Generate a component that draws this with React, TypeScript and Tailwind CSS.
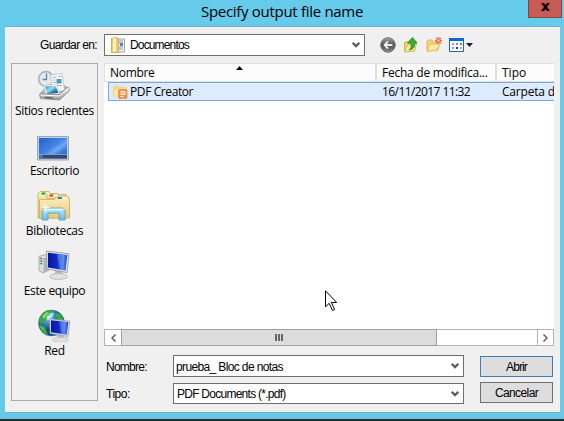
import React from "react";

const ui = "font-['Open_Sans','Noto_Sans',sans-serif] whitespace-nowrap text-[12px] text-black";
const sans = "font-['Liberation_Sans',Arial,sans-serif] whitespace-nowrap text-[12px] text-black";

function RecentIcon() {
  return (
    <svg width="32" height="32" viewBox="0 0 32 32">
      <defs>
        <linearGradient id="photo" x2="1" y2="1"><stop stopColor="#2b7fd0" /><stop offset=".4" stopColor="#9ad8f5" /><stop offset=".7" stopColor="#1b7a8c" /><stop offset="1" stopColor="#1668b8" /></linearGradient>
        <linearGradient id="tray" x2="0" y2="1"><stop stopColor="#efefef" /><stop offset="1" stopColor="#9c9c9c" /></linearGradient>
      </defs>
      <circle cx="8" cy="9" r="7.300" fill="#e2eaee" stroke="#a9b9c2" strokeWidth="1.800" />
      <path d="M8.500 3.500V9.500H4.500" fill="none" stroke="#6b8594" strokeWidth="1.300" />
      <path d="M2 24l6-7 19-1 4 3-10 9z" fill="#b4b4b4" stroke="#8c8c8c" strokeWidth=".7" />
      <path d="M12.500 5l11.500-1.500L26.500 20l-12 3z" fill="#fbfbfb" stroke="#bdbdbd" strokeWidth=".8" />
      <path d="M14.500 7.500l4-.5M14.500 10h3M15 12.500h3M20.500 6.500h3M19 15.500h5" stroke="#a5a5a5" strokeWidth=".9" />
      <path d="M18.500 9h5v4.500h-5z" fill="#4c9bb4" />
      <path d="M5.500 15.500l13-1 3.500 9.500-14 2z" fill="#fff" stroke="#b5b5b5" strokeWidth=".6" />
      <path d="M7 16.500l10.500-.8 3 7.300-11.500 1.300z" fill="url(#photo)" />
      <path d="M1.500 24.500l1.500-.5 18 .5 9-7.500 1.200 1v3l-9.700 9-19-1.500z" fill="url(#tray)" stroke="#7d7d7d" strokeWidth=".7" />
      <path d="M2.500 25l18.500 1 9.500-7.500" fill="none" stroke="#fff" strokeWidth="1" />
      <path d="M7 27.500l8 .7" stroke="#5f5f5f" strokeWidth="1.300" />
    </svg>
  );
}

function DesktopIcon() {
  return (
    <svg className="-ml-[2px]" width="32" height="32" viewBox="0 0 32 32">
      <defs>
        <linearGradient id="desk" x2="1" y2="1">
          <stop stopColor="#2861c0" /><stop offset=".45" stopColor="#3f83e6" /><stop offset=".6" stopColor="#6fa9f5" /><stop offset=".75" stopColor="#3a7ade" /><stop offset="1" stopColor="#2a62c4" />
        </linearGradient>
      </defs>
      <path d="M.5 6.500h31v23.500H.5z" fill="#c3cfde" stroke="#98a7bd" />
      <path d="M2 8h28v20.500H2z" fill="url(#desk)" />
      <path d="M2 24.500h28v4H2z" fill="#37496a" />
      <path d="M2 24.500h28" stroke="#7f98c2" />
      <path d="M2 25h4v3.500H2z" fill="#5a7392" />
    </svg>
  );
}

function LibrariesIcon() {
  return (
    <svg width="34" height="32" viewBox="0 0 34 32">
      <defs>
        <linearGradient id="lib" x2="0" y2="1"><stop stopColor="#fdf0bd" /><stop offset="1" stopColor="#e5c977" /></linearGradient>
        <linearGradient id="stand" x2="0" y2="1"><stop stopColor="#bcebfc" /><stop offset="1" stopColor="#6bb7dd" /></linearGradient>
      </defs>
      <path d="M1 28V4l2-2.500h9l2 3h15v23.500z" fill="url(#lib)" stroke="#cfaf5d" strokeWidth=".9" />
      <path d="M9.500 8V5.500l2-2h9l2 3h8V10z" fill="#fae8a7" stroke="#cfaf5d" strokeWidth=".9" />
      <path d="M2.500 28V9.500h15l2-3.500h11l2 3v19z" fill="url(#lib)" stroke="#cfaf5d" strokeWidth=".9" />
      <path d="M4.500 2.500h4v2h-4z" fill="#15a52e" /><path d="M12.500 4.500h4v2h-4z" fill="#d4412a" /><path d="M20.500 7h4.500v2h-4.500z" fill="#1b8cce" />
      <path d="M8.500 3.500h4M16.500 5.500h4M25 8h5" stroke="#fff" />
      <path d="M5 30V20.500l2-2.500h18.500l2.500 2.500V30h-6v-7H11v7z" fill="url(#stand)" stroke="#5ba5c9" strokeWidth=".9" />
      <path d="M6.500 19.500h20" stroke="#e1f9ff" strokeWidth="1.500" />
      <path d="M8.500 13v9M4 17.500h9M5.500 14.500l6 6M11.500 14.500l-6 6" stroke="#fff" strokeWidth=".8" />
    </svg>
  );
}

function Monitor() {
  return (
    <>
      <path d="M17 20l7 1 1 5h-8z" fill="#b9bcbd" />
      <ellipse cx="20.500" cy="26.500" rx="9" ry="3" fill="#e0e1e2" stroke="#b3b5b7" strokeWidth=".8" />
      <path d="M8.500 1l22.500 2.800-2 18.700-20-3.500z" fill="#dfe2e8" stroke="#8f949e" strokeWidth=".8" />
      <path d="M10 2.700l19.300 2.300-1.800 15.500-17.500-3z" fill="url(#screen)" />
      <path d="M19 4l8 1-2 15-3-.5z" fill="#7fa0f2" opacity=".45" />
    </>
  );
}

function ComputerIcon() {
  return (
    <svg width="32" height="32" viewBox="0 0 32 32">
      <defs><linearGradient id="screen" x2="1"><stop stopColor="#0a17a0" /><stop offset=".45" stopColor="#0d2ac4" /><stop offset=".8" stopColor="#4f7cea" /><stop offset="1" stopColor="#1d3fcb" /></linearGradient></defs>
      <path d="M1 6.500l6-2 4 1.500v14l-6 3-4-2.500z" fill="#dcdee0" stroke="#9a9da0" strokeWidth=".8" />
      <path d="M5.500 8l5-1v13l-5 2.500z" fill="#b0b4b8" />
      <path d="M2 8l2.500 1M2 10.500l2.500 1" stroke="#555" /><circle cx="3.200" cy="13.500" r="1.100" fill="#25b51e" />
      <Monitor />
    </svg>
  );
}

function NetworkIcon() {
  return (
    <svg width="34" height="33" viewBox="0 0 34 33">
      <defs><radialGradient id="globe" cx=".35" cy=".25"><stop stopColor="#cbefff" /><stop offset=".35" stopColor="#4da7dc" /><stop offset="1" stopColor="#104986" /></radialGradient></defs>
      <circle cx="14.500" cy="14" r="13" fill="url(#globe)" stroke="#397fa9" strokeWidth=".6" />
      <path d="M3 8C7 1 11 1 16 2l-2 4-4 1-1 4-5 4-2-2zM18 4l6 1 3 7-5-1-3-3zM2 15l6 3 2 5 1 3C6 25 3 21 2 15z" fill="#3aa83c" />
      <path d="M5 7l5-4 2 1-5 6zM3 17l3 2 1 3z" fill="#93d569" />
      <path d="M12 5q4-3 5 0l-3 5q-3 2-4 0z" fill="#d9f3ff" opacity=".7" />
      <g transform="translate(5 9) scale(.9 .82)"><Monitor /></g>
    </svg>
  );
}

function DocumentsIcon() {
  return (
    <svg width="15" height="17" viewBox="0 0 15 17">
      <path d="M4 2h9.500v13H4z" fill="#f3f6f7" stroke="#a1a5a8" />
      <path d="M8 4h4M8 6h4M8 10h4M8 12h4" stroke="#8a9ba7" /><path d="M9 6h3v3H9z" fill="#4583d2" />
      <path d="M.5 1.500l4-1 3 1v14H.5z" fill="#e9cc71" stroke="#c5a149" strokeWidth=".8" /><path d="M2 1h3v14H2z" fill="#fff0b0" />
    </svg>
  );
}

function FileFolderIcon() {
  return (
    <svg width="15" height="14" viewBox="0 0 15 14">
      <path d="M.5 11V2l1-1h4l1 1.500h6.500V11z" fill="#f9dc8a" stroke="#f0d284" /><path d="M1 5h12v5.500H1z" fill="#ffe9a8" />
      <rect x="5.500" y="4.500" width="8.500" height="9" rx="1" fill="#f0914a" stroke="#ee8236" strokeWidth=".6" />
      <path d="M8 6.500h4v3H8z" fill="#ffb67a" stroke="#fff2dc" /><path d="M7.500 11.500h3" stroke="#fff2dc" />
    </svg>
  );
}

const BackIcon = () => (
  <svg width="16" height="16" viewBox="0 0 16 16"><defs><linearGradient id="back" x2="0" y2="1"><stop stopColor="#a5a5a5" /><stop offset=".5" stopColor="#4c4c4c" /><stop offset="1" stopColor="#8a8a8a" /></linearGradient></defs><circle cx="8" cy="8" r="7.300" fill="url(#back)" stroke="#777" /><path d="M12.500 8h-8M8 4.500L4.500 8 8 11.500" fill="none" stroke="#eee" strokeWidth="1.800" /></svg>
);
const UpIcon = () => (
  <svg width="16" height="16" viewBox="0 0 16 16"><path d="M1.500 14V5.500l3-1 1 1h6V14z" fill="#f3d276" stroke="#d6b455" /><path d="M1.500 15l3-7.500 9-1-2 7.500z" fill="#ffe89b" stroke="#d9b755" /><path d="M6 13c2.500-1.500 2.500-4 2-7H4.500L9.500.5 14 6h-2.500c.5 3-.5 6-5.500 7z" fill="#3fae33" stroke="#1b7f22" strokeWidth=".8" /></svg>
);
const NewFolderIcon = () => (
  <svg width="16" height="16" viewBox="0 0 16 16"><path d="M1 13.500V4l1-1h4l1 2h5v8z" fill="#f2d27c" stroke="#dcb95f" /><path d="M1 14.500L4 7h10l-3 6z" fill="#ffec9e" stroke="#dfbb5b" /><path d="M12.500 0v7M9 3.500h7M10 1l5 5M15 1l-5 5" stroke="#ee5b35" strokeWidth="1.200" /><circle cx="12.500" cy="3.500" r="1.200" fill="#ffd5a5" /></svg>
);
const ViewIcon = () => (
  <svg width="24" height="15" viewBox="0 0 24 15"><path d="M.5.5h14v13H.5z" fill="#fff" stroke="#1068cc" /><path d="M0 0h15v3H0z" fill="#0c66d4" /><path d="M3 5h2v2H3z" fill="#a0a0a8" /><path d="M7 5h2v2H7z" fill="#7b8ce0" /><path d="M11 5h2v2h-2z" fill="#38a34c" /><path d="M3 9h2v2H3z" fill="#f08355" /><path d="M7 9h2v2H7z" fill="#123e9b" /><path d="M11 9h2v2h-2z" fill="#eea72f" /><path d="M17 5h7l-3.500 4z" fill="#1f1f1f" /></svg>
);

function Chevron() {
  return <svg width="8" height="6" viewBox="0 0 8 6"><path d="M.7.8L4 4.100 7.300.8" fill="none" stroke="#5d5d5d" strokeWidth="2.200" /></svg>;
}

function Combo({ className, children }: { className: string; children: React.ReactNode }) {
  return <div className={`flex items-center justify-between border border-[#6f6f6f] bg-white pr-1 ${className}`}>{children}<Chevron /></div>;
}

const places = [
  { label: "Sitios recientes", Icon: RecentIcon, spacing: "tracking-[-0.33px]" },
  { label: "Escritorio", Icon: DesktopIcon, spacing: "tracking-[-0.35px]" },
  { label: "Bibliotecas", Icon: LibrariesIcon, spacing: "tracking-[-0.3px]" },
  { label: "Este equipo", Icon: ComputerIcon, spacing: "tracking-[-0.38px]" },
  { label: "Red", Icon: NetworkIcon, spacing: "tracking-[-0.3px]" },
];

export default function App() {
  return (
    <div className="relative flex h-[421px] w-[564px] flex-col overflow-hidden border-b-2 border-[#292b2d] bg-[#66caea]">
      <header className="flex h-[26px] shrink-0 items-start">
        <h1 className={`${ui} ml-[201px] w-[327px] text-[15px]! leading-[23px] tracking-[-0.3px]`}>Specify output file name</h1>
        <button aria-label="Cerrar" className="flex h-[18px] w-[34px] items-center justify-center border border-t-0 border-[#86453f] bg-[#c75c56] pb-[3px]">
          <svg width="9" height="8" viewBox="0 0 9 8"><path d="M0 0h3l1.500 2L6 0h3L6 4l3 4H6L4.500 6 3 8H0l3-4z" fill="#090303" /></svg>
        </button>
      </header>
      <main className="ml-[5px] flex h-[387px] w-[555px] shrink-0 flex-col border-y border-[#74b2c7] bg-[#f0f0f0]">
        <div className="flex h-[36px] shrink-0 pt-[7px]">
          <label className={`${sans} w-[64px] pl-[35px] leading-[22px] tracking-[-0.65px]`}>Guardar en:</label>
          <Combo className="ml-[35px] h-[22px] w-[261px]"><div className="flex items-center gap-1 pl-[6px]"><DocumentsIcon /><span className={`${sans} tracking-[-0.85px]`}>Documentos</span></div></Combo>
          <div className="ml-[15px] flex h-[22px] items-center gap-[7px]"><BackIcon /><UpIcon /><NewFolderIcon /><ViewIcon /></div>
        </div>
        <div className="flex flex-1">
          <nav className="ml-[6px] h-[338px] w-[87px] border border-[#aaa] bg-[#f0f0f0] pt-[5px]">
            {places.map(({ label, Icon, spacing }) => (
              <button key={label} className="flex h-[60px] w-full flex-col items-center">
                <span className="flex h-[33px] items-center pr-px"><Icon /></span><span className={`${ui} leading-[17px] ${spacing}`}>{label}</span>
              </button>
            ))}
          </nav>
          <section className="ml-[6px] flex w-[450px] flex-col">
            <div className="flex h-[283px] flex-col bg-white">
              <div className={`${ui} flex h-[19px] border border-r-0 border-[#dedede] bg-[#fcfcfc] leading-[18px]`}>
                <div className="flex w-[272px] justify-between border-r-2 border-[#dedede] pl-[5px]"><span className="tracking-[-0.3px]">Nombre</span><svg className="mr-[132px] mt-[2px]" width="7" height="4"><path d="M3.500 0L7 4H0z" /></svg></div>
                <div className="w-[120px] border-r-2 border-[#dedede] pl-[5px] tracking-[-0.25px]">Fecha de modifica...</div><div className="pl-[5px]">Tipo</div>
              </div>
              <div className={`${ui} ml-1 flex h-[19px] items-center overflow-hidden border border-r-0 border-[#7da9d9] bg-[#ddebff]`}>
                <div className="flex w-[273px] shrink-0 items-center gap-[2px] pl-1"><FileFolderIcon /><span className="tracking-[-0.4px]">PDF Creator</span></div><span className="w-[120px] shrink-0 tracking-[-0.58px]">16/11/2017 11:32</span><span className="tracking-[-0.2px]">Carpeta de archivos</span>
              </div>
              <div className="mt-auto flex h-[17px] border border-[#b4b4b4]">
                <button className="flex w-[16px] items-center justify-center"><svg width="5" height="8"><path d="M4.500.5L1 4l3.500 3.500" fill="none" stroke="#555" strokeWidth="1.400" /></svg></button>
                <div className="-my-px flex w-[316px] items-center justify-center gap-px border border-[#a0a0a0] bg-[#dcdcdc]"><i className="h-[7px] w-[2px] bg-[#666]" /><i className="h-[7px] w-[2px] bg-[#666]" /><i className="h-[7px] w-[2px] bg-[#666]" /></div>
                <button className="ml-auto flex w-[16px] items-center justify-center border-l border-[#b4b4b4]"><svg width="5" height="8"><path d="M.5.5L4 4 .5 7.500" fill="none" stroke="#555" strokeWidth="1.400" /></svg></button>
              </div>
            </div>
            <div className="flex pt-[9px]">
              <div className="flex flex-col gap-[6px]">
                <div className="flex h-[22px] items-center"><label className={`${sans} w-[69px] pl-[2px] pt-[2px] tracking-[-0.75px]`}>Nombre:</label><Combo className="h-[22px] w-[291px] pl-[2px]"><span className={`${sans} pt-px tracking-[-0.63px]`}>prueba_ Bloc de notas</span></Combo></div>
                <div className="flex h-[21px] items-center"><label className={`${sans} w-[69px] pl-[2px] tracking-[-0.5px]`}>Tipo:</label><Combo className="h-[21px] w-[291px] pl-[3px]"><span className={`${sans} tracking-[-0.74px]`}>PDF Documents (*.pdf)</span></Combo></div>
              </div>
              <div className="ml-[16px] mt-px flex flex-col gap-[5px]"><button className={`${sans} h-[21px] w-[73px] border border-[#3c7fb1] bg-[#ddd] tracking-[-0.9px]`}>Abrir</button><button className={`${sans} h-[21px] w-[73px] border border-[#707070] bg-[#ddd] tracking-[-0.6px]`}>Cancelar</button></div>
            </div>
          </section>
        </div>
      </main>
      <svg className="absolute left-[325px] top-[290px]" width="13" height="22" viewBox="0 0 13 22"><path d="M.5.8v16l3.700-3.500 3.200 7.200 2.200-1-3.200-7h5.300z" fill="#fff" stroke="#000" /></svg>
    </div>
  );
}
